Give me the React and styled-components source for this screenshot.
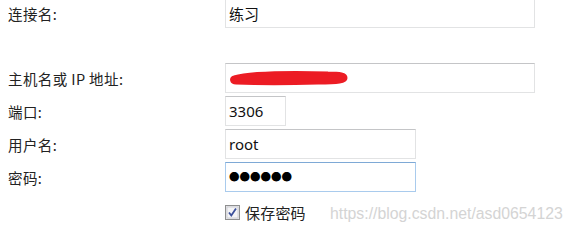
import React from "react";
import styled, { createGlobalStyle } from "styled-components";

const Global = createGlobalStyle`
  html, body { margin: 0; padding: 0; background: #fff; }
  body { font-family: "Noto Sans CJK SC", "Noto Sans", sans-serif; color: #1b1b1b; }
`;

const Page = styled.div`
  position: relative;
  width: 572px;
  height: 239px;
  overflow: hidden;
  background: #fff;
`;

const Form = styled.div`
  display: grid;
  grid-template-columns: 225px 1fr;
  margin-top: -2px;
  padding-left: 8px;
  row-gap: 3px;
`;

const Label = styled.div`
  display: flex;
  align-items: center;
  height: 30px;
  font-size: 14.5px;
  letter-spacing: 0.4px;
  color: #222;
  margin-top: ${(p) => p.$mt || 0}px;
`;

const Field = styled.div`
  position: relative;
  box-sizing: border-box;
  height: 30px;
  width: ${(p) => p.$w}px;
  margin-left: -8px;
  margin-top: ${(p) => p.$mt || 0}px;
  border: 1px solid ${(p) => (p.$focus ? "#a9cbed" : "#e2e3e4")};
  border-top-color: ${(p) => (p.$focus ? "#7ea9d6" : "#c4c5c7")};
  background: #fff;
  display: flex;
  align-items: center;
  padding-left: 3px;
  font-family: "Noto Sans", "Noto Sans CJK SC", sans-serif;
  font-size: 15px;
  color: #111;
`;

const Dots = styled.span`
  font-size: 10.5px;
  letter-spacing: 0px;
  color: #000;
  line-height: 1;
`;

const Scribble = styled.svg`
  position: absolute;
  left: 2px;
  top: 3px;
`;

const CheckRow = styled.div`
  grid-column: 2;
  margin-left: -8px;
  margin-top: 7px;
  display: flex;
  align-items: center;
  gap: 5px;
  font-size: 15px;
  letter-spacing: 0.2px;
  color: #222;
`;

const Watermark = styled.div`
  position: absolute;
  left: 330px;
  top: 205px;
  font-family: "Liberation Sans", Arial, sans-serif;
  font-size: 15.8px;
  color: #d4d4d4;
`;

export default function App() {
  return (
    <Page>
      <Global />
      <Form>
        <Label>连接名:</Label>
        <Field $w={310}>练习</Field>

        <Label $mt={32}>主机名或 IP 地址:</Label>
        <Field $w={310} $mt={32}>
          <Scribble width="124" height="22" viewBox="0 0 124 22">
            <path
              d="M6 10 C 20 6, 60 5, 100 6 C 112 6, 118 7, 118 11 C 118 15, 110 16, 90 16 C 60 17, 30 17, 8 16 C 3 16, 2 11, 6 10 Z"
              fill="#ec1c24"
              stroke="#ec1c24"
              strokeWidth="3"
              strokeLinejoin="round"
            />
          </Scribble>
        </Field>

        <Label>端口:</Label>
        <Field $w={61}>3306</Field>

        <Label>用户名:</Label>
        <Field $w={191}>root</Field>

        <Label>密码:</Label>
        <Field $w={191} $focus>
          <Dots>●●●●●●</Dots>
        </Field>

        <CheckRow>
          <svg width="15" height="15" viewBox="0 0 15 15">
            <rect x="0.5" y="0.5" width="14" height="14" fill="#e8e8ec" stroke="#8e8f8f" />
            <rect x="2" y="2" width="11" height="11" fill="#f4f4f6" stroke="#c8c9cc" strokeWidth="0.8" />
            <path d="M4 7.5 L6.3 10.5 L11 3.5" fill="none" stroke="#3b4f9a" strokeWidth="1.8" />
          </svg>
          保存密码
        </CheckRow>
      </Form>
      <Watermark>https://blog.csdn.net/asd0654123</Watermark>
    </Page>
  );
}
